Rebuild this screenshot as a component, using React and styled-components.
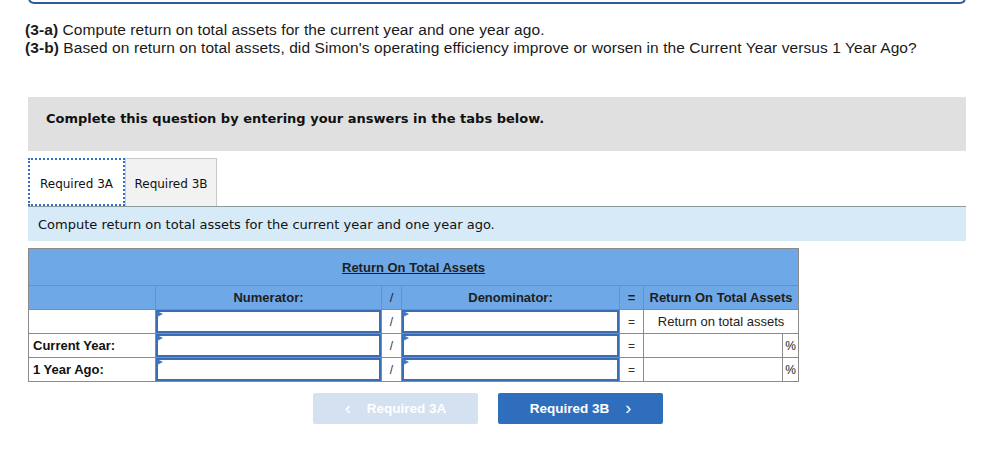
import React from "react";
import styled, { createGlobalStyle } from "styled-components";

const GlobalStyle = createGlobalStyle`
  body {
    margin: 0;
    background: #fff;
    font-family: "Liberation Sans", Arial, sans-serif;
    color: #222;
  }
`;

const App = () => {
  return (
    <>
      <GlobalStyle />
      <Page>
        <TopFrame />
        <Prompt>
          <div>
            <b>(3-a)</b> Compute return on total assets for the current year and one year ago.
          </div>
          <div>
            <b>(3-b)</b> Based on return on total assets, did Simon's operating efficiency improve or worsen in the Current Year versus 1 Year Ago?
          </div>
        </Prompt>
        <Notice>Complete this question by entering your answers in the tabs below.</Notice>
        <Tabs>
          <Tab active>Required 3A</Tab>
          <Tab>Required 3B</Tab>
        </Tabs>
        <Instruction>Compute return on total assets for the current year and one year ago.</Instruction>

        <Grid>
          <colgroup>
            <col style={{ width: 127 }} />
            <col style={{ width: 226 }} />
            <col style={{ width: 20 }} />
            <col style={{ width: 218 }} />
            <col style={{ width: 24 }} />
            <col style={{ width: 155 }} />
          </colgroup>
          <tbody>
            <tr>
              <TitleCell colSpan={6}>
                <u>Return On Total Assets</u>
              </TitleCell>
            </tr>
            <tr>
              <HeadCell />
              <HeadCell>Numerator:</HeadCell>
              <HeadCell light>/</HeadCell>
              <HeadCell>Denominator:</HeadCell>
              <HeadCell>=</HeadCell>
              <HeadCell>Return On Total Assets</HeadCell>
            </tr>
            <tr>
              <LabelCell />
              <InputCell><Field /></InputCell>
              <SignCell>/</SignCell>
              <InputCell><Field /></InputCell>
              <SignCell>=</SignCell>
              <ResultLabel>Return on total assets</ResultLabel>
            </tr>
            {["Current Year:", "1 Year Ago:"].map((label) => (
              <tr key={label}>
                <LabelCell>{label}</LabelCell>
                <InputCell><Field /></InputCell>
                <SignCell>/</SignCell>
                <InputCell><Field /></InputCell>
                <SignCell>=</SignCell>
                <ResultCell>
                  <ResultBox>
                    <span />
                    <Pct>%</Pct>
                  </ResultBox>
                </ResultCell>
              </tr>
            ))}
          </tbody>
        </Grid>

        <Nav>
          <NavButton disabled>
            <Chevron>&lsaquo;</Chevron>
            Required 3A
          </NavButton>
          <NavButton>
            Required 3B
            <Chevron>&rsaquo;</Chevron>
          </NavButton>
        </Nav>
      </Page>
    </>
  );
};

const Page = styled.div`
  width: 938px;
  padding-left: 28px;
  height: 456px;
  overflow: hidden;
`;

const TopFrame = styled.div`
  height: 6px;
  margin-top: -4px;
  width: 934px;
  border: 2px solid #2d5c96;
  border-top: none;
  border-radius: 0 0 6px 6px;
`;

const Prompt = styled.div`
  margin: 17px 0 0 -3px;
  font-size: 15.5px;
  letter-spacing: 0.08px;
  line-height: 18px;
  color: #1a1a1a;
  b {
    font-weight: bold;
  }
`;

const Notice = styled.div`
  margin-top: 40px;
  height: 54px;
  box-sizing: border-box;
  background: #e0e0e0;
  padding: 14px 0 0 18px;
  line-height: 16px;
  font-family: "DejaVu Sans", Verdana, sans-serif;
  font-weight: bold;
  font-size: 13px;
  color: #111;
`;

const Tabs = styled.div`
  margin-top: 7px;
  display: flex;
  height: 48px;
`;

const Tab = styled.div`
  box-sizing: border-box;
  height: 48px;
  display: flex;
  align-items: center;
  justify-content: center;
  padding-top: 3px;
  font-family: "DejaVu Sans", Verdana, sans-serif;
  font-size: 12px;
  color: #111;
  width: ${(p) => (p.active ? "97px" : "92px")};
  background: ${(p) => (p.active ? "#fff" : "#f2f2f2")};
  border: ${(p) => (p.active ? "2px dotted #2f6fc4" : "1px solid #c8c8c8")};
  border-bottom: ${(p) => (p.active ? "2px dotted #2f6fc4" : "none")};
`;

const Instruction = styled.div`
  height: 35px;
  box-sizing: border-box;
  background: #d6eaf8;
  border-top: 1px solid #8c9a9e;
  display: flex;
  align-items: center;
  padding: 1px 0 0 10px;
  font-family: "DejaVu Sans", Verdana, sans-serif;
  font-size: 13px;
  color: #111;
`;

const Grid = styled.table`
  margin-top: 7px;
  border-collapse: collapse;
  table-layout: fixed;
  width: 770px;
  font-size: 13px;
  td {
    border: 1px solid #8a8a8a;
    padding: 0;
  }
`;

const TitleCell = styled.td`
  height: 36px;
  background: #6fa8e6;
  text-align: center;
  font-weight: bold;
  color: #1e1e1e;
`;

const HeadCell = styled.td`
  height: 23px;
  background: #6fa8e6;
  text-align: center;
  font-weight: ${(p) => (p.light ? "normal" : "bold")};
  color: #1e1e1e;
`;

const LabelCell = styled.td`
  height: 23px;
  font-weight: bold;
  padding-left: 4px !important;
  color: #111;
`;

const SignCell = styled.td`
  text-align: center;
  font-size: 12px;
  color: #333;
`;

const InputCell = styled.td`
  position: relative;
`;

const Field = styled.div`
  position: relative;
  box-sizing: border-box;
  height: 23px;
  border: 2px solid #3a6db3;
  background: #fff;
  &::before {
    content: "";
    position: absolute;
    left: -1px;
    top: -1px;
    border-left: 6px solid #3a78d0;
    border-top: 3px solid transparent;
    border-bottom: 3px solid transparent;
  }
`;

const ResultLabel = styled.td`
  text-align: center;
  font-size: 13px;
  color: #222;
`;

const ResultCell = styled.td``;

const ResultBox = styled.div`
  display: grid;
  grid-template-columns: 1fr 16px;
  height: 23px;
`;

const Pct = styled.span`
  border-left: 1px solid #8a8a8a;
  display: flex;
  align-items: center;
  justify-content: center;
  font-size: 12px;
  color: #222;
`;

const Nav = styled.div`
  margin-top: 11px;
  padding-left: 285px;
  display: flex;
  gap: 20px;
`;

const NavButton = styled.div`
  width: 165px;
  height: 31px;
  border-radius: 2px;
  display: flex;
  align-items: center;
  justify-content: center;
  gap: 16px;
  font-weight: bold;
  font-size: 13.5px;
  color: #fff;
  background: ${(p) => (p.disabled ? "#d3e1f1" : "#2e6ebd")};
`;

const Chevron = styled.span`
  font-size: 18px;
  font-weight: normal;
  line-height: 1;
  margin-top: -2px;
`;

export default App;
